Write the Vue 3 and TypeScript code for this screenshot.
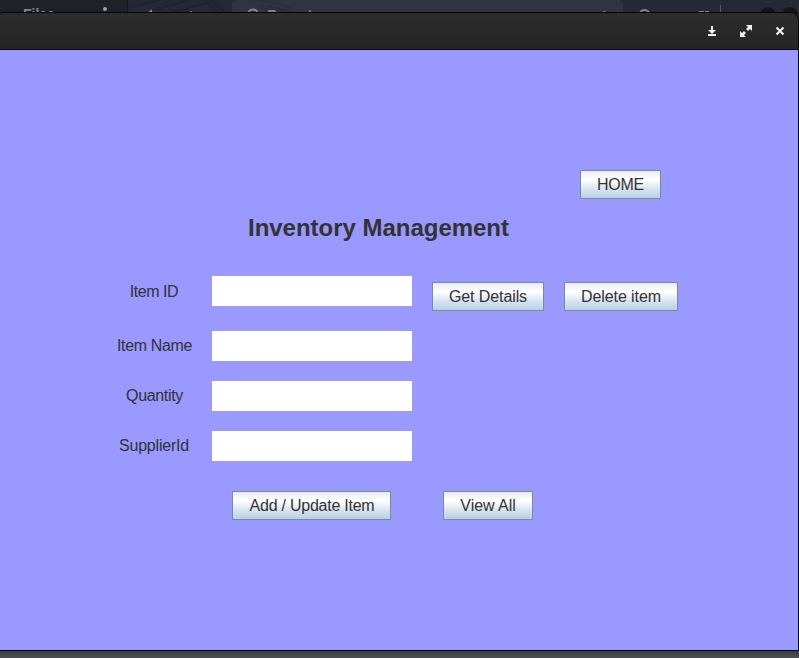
<script setup lang="ts">
import { ref } from 'vue'

interface Field {
  key: string
  label: string
}

const fields: Field[] = [
  { key: 'id', label: 'Item ID' },
  { key: 'name', label: 'Item Name' },
  { key: 'quantity', label: 'Quantity' },
  { key: 'supplier', label: 'SupplierId' },
]
const values = ref<Record<string, string>>({ id: '', name: '', quantity: '', supplier: '' })
</script>

<template>
  <div class="desktop">
    <svg class="backdrop" viewBox="0 0 799 14" aria-hidden="true">
      <rect width="799" height="14" fill="#262833" />
      <rect width="127" height="14" fill="#1f2028" />
      <rect x="127" width="1" height="14" fill="#15161b" />
      <g fill="none" stroke="#20232c" stroke-width="2">
        <path d="M128 8L160 0M150 11L190 0M172 12L214 1M205 0L219 14M211 0L226 14" />
      </g>
      <path d="M232 14V5Q232 0 237 0H618Q623 0 623 5V14Z" fill="#31333f" />
      <path d="M249 0Q275 1 294 9M257 5L278 13M267 6L299 14" fill="none" stroke="#2b2e38" stroke-width="2" />
      <text x="23" y="19" class="ghost bold">Files</text>
      <circle cx="105" cy="9" r="2" fill="#a1a1a5" />
      <path d="M149 12.500L151 10.500L152 12.500M190 12H192M603 12H606" stroke="#85868b" stroke-width="1.5" fill="none" />
      <circle cx="253" cy="15" r="5.5" class="ring" />
      <text x="267" y="20" class="ghost bold">Report</text>
      <circle cx="644.500" cy="15" r="5" class="ring" />
      <path d="M699 11.500H704M705 11.500H709" stroke="#85868b" />
      <path d="M720.500 5V14" stroke="#555762" />
      <circle cx="768" cy="15" r="8" fill="#14151a" />
      <circle cx="790" cy="15" r="8" fill="#14151a" />
    </svg>
    <main class="window">
      <header class="titlebar">
        <svg width="10" height="12" viewBox="0 0 10 12" class="icon"><path d="M4 1H6V5H9L5 9L1 5H4ZM1 9H9V11H1Z" /></svg>
        <svg width="12" height="12" viewBox="0 0 12 12" class="icon"><path d="M6 0H12V6L10 4L8 6L6 4L8 2ZM0 6L2 8L4 6L6 8L4 10L6 12H0Z" /></svg>
        <svg width="10" height="12" viewBox="0 0 10 12" class="icon"><path d="M1.500 2.500L8.500 9.500M8.500 2.500L1.500 9.500" class="cross" /></svg>
      </header>
      <section class="panel">
        <button class="btn home">HOME</button>
        <h1>Inventory Management</h1>
        <form class="form" @submit.prevent>
          <div v-for="f in fields" :key="f.key" class="row" :class="f.key">
            <label :for="f.key">{{ f.label }}</label>
            <input :id="f.key" v-model="values[f.key]" type="text" />
            <template v-if="f.key === 'id'">
              <button class="btn details" type="button">Get Details</button>
              <button class="btn delete" type="button">Delete item</button>
            </template>
          </div>
          <div class="actions">
            <button class="btn update">Add / Update Item</button>
            <button class="btn view" type="button">View All</button>
          </div>
        </form>
      </section>
    </main>
  </div>
</template>

<style>
body {
  margin: 0;
  overflow: hidden;
}
</style>

<style scoped>
.desktop {
  position: relative;
  box-sizing: border-box;
  width: 799px;
  height: 658px;
  padding-top: 12px;
  overflow: hidden;
  background: linear-gradient(#262833 0 630px, #363a3c 650px, #4c5052 658px);
  font-family: "Liberation Sans", Arial, sans-serif;
}
.backdrop {
  position: absolute;
  top: 0;
  left: 0;
  width: 799px;
  height: 14px;
}
.ghost {
  font-size: 14px;
  fill: #85868b;
}
.bold {
  font-weight: bold;
}
.ring {
  fill: none;
  stroke: #85868b;
  stroke-width: 2;
}
.window {
  position: relative;
  box-sizing: border-box;
  width: 799px;
  height: 639px;
  border: 1px solid #050505;
  border-left: 0;
  border-radius: 4px 8px 0 0;
  overflow: hidden;
}
.titlebar {
  display: flex;
  align-items: center;
  justify-content: flex-end;
  gap: 23px;
  box-sizing: border-box;
  height: 37px;
  padding: 0 13px 0 0;
  background: linear-gradient(#2d2d2d, #252525);
  border-bottom: 1px solid #090909;
}
.icon {
  display: block;
  fill: #eeeeec;
}
.cross {
  fill: none;
  stroke: #eeeeec;
  stroke-width: 2.1;
}
.panel {
  display: flex;
  flex-direction: column;
  box-sizing: border-box;
  height: 600px;
  padding-top: 120px;
  background: #9999ff;
  color: #333;
}
.btn {
  box-sizing: border-box;
  height: 29px;
  padding: 0;
  border: 1px solid #7a8a99;
  border-radius: 0;
  background: linear-gradient(#e4ecf4 0, #fff 30%, #fff 34%, #dce7f0 62%, #b8cfe5 100%);
  color: #333;
  font: 16px/27px "Liberation Sans", Arial, sans-serif;
  white-space: nowrap;
}
.home {
  width: 81px;
  margin-left: 580px;
  letter-spacing: -0.2px;
}
h1 {
  width: 262px;
  margin: 15px 0 0 248px;
  font-size: 24px;
  line-height: 28px;
  letter-spacing: -0.02px;
  white-space: nowrap;
}
.form {
  display: flex;
  flex-direction: column;
  gap: 20px;
  padding: 34px 0 0 116px;
}
.row {
  display: flex;
  align-items: flex-start;
  height: 30px;
}
.row.id {
  height: 35px;
}
label {
  box-sizing: border-box;
  width: 77px;
  margin-right: 19px;
  font-size: 16px;
  line-height: 30px;
  text-align: center;
  white-space: nowrap;
}
input {
  box-sizing: border-box;
  width: 200px;
  height: 30px;
  padding: 0 4px;
  border: 0;
  background: #fff;
  font: 16px "Liberation Sans", Arial, sans-serif;
  outline: none;
}
.id label {
  padding-top: 1px;
  padding-right: 1px;
  letter-spacing: -0.45px;
}
.name label { letter-spacing: -0.35px; }
.quantity label { letter-spacing: -0.35px; }
.supplier label {
  padding-right: 1px;
  letter-spacing: -0.2px;
}
.details {
  width: 112px;
  margin: 6px 20px 0;
  letter-spacing: -0.1px;
}
.delete {
  width: 114px;
  margin-top: 6px;
  letter-spacing: -0.08px;
}
.actions {
  display: flex;
  gap: 52px;
  padding: 10px 0 0 116px;
}
.update {
  width: 159px;
  padding-left: 1px;
  letter-spacing: -0.24px;
}
.view {
  width: 90px;
  letter-spacing: -0.05px;
}
</style>
